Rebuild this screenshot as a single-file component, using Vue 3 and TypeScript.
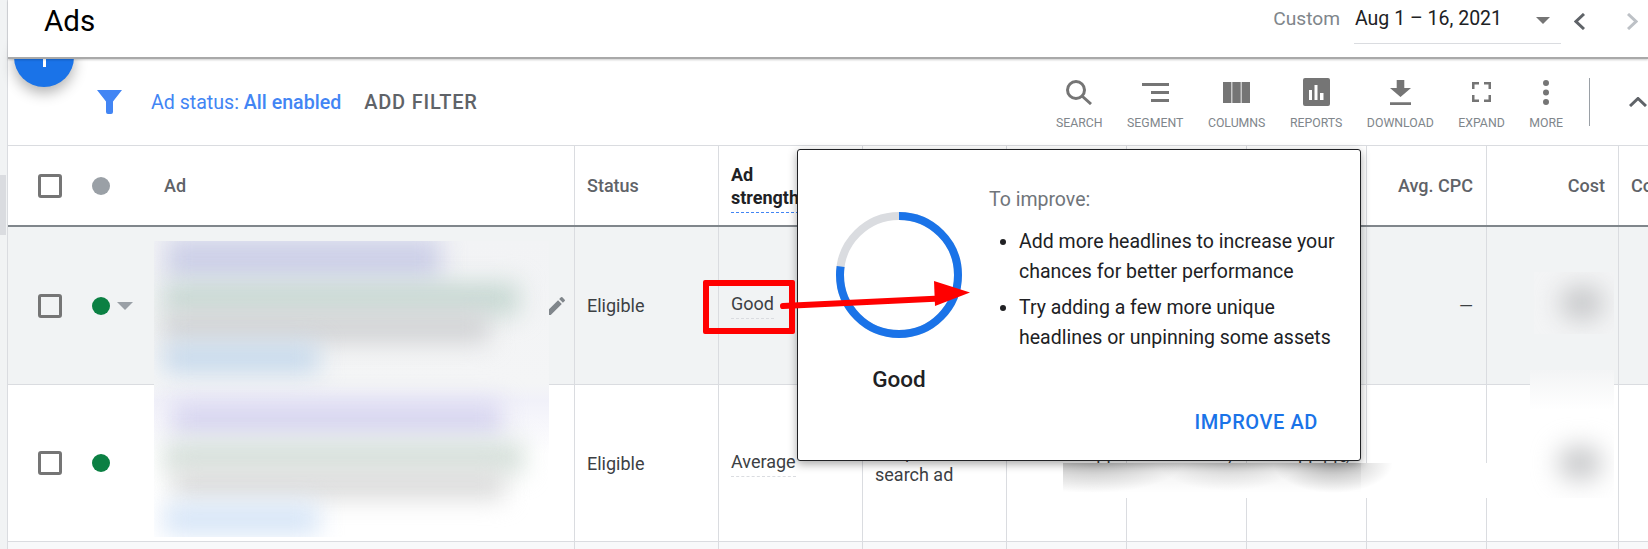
<script setup lang="ts">
interface Tool {
  label: string
  w: number
  h: number
  d: string
  stroke?: boolean
}

const tools: Tool[] = [
  { label: 'Search', w: 26, h: 25, d: 'M18.500 10a8.500 8.500 0 1 1-17 0 8.500 8.500 0 0 1 17 0zM16 16l9 8', stroke: true },
  { label: 'Segment', w: 27, h: 19, d: 'M0 0h27v3H0zM9 8h18v3H9zM9 16h18v3H9z' },
  { label: 'Columns', w: 27, h: 21, d: 'M0 0h8.400v21H0zM9.300 0h8.400v21H9.300zM18.600 0H27v21h-8.400z' },
  {
    label: 'Reports',
    w: 27,
    h: 28,
    d: 'M2 0h23a2 2 0 0 1 2 2v24a2 2 0 0 1-2 2H2a2 2 0 0 1-2-2V2a2 2 0 0 1 2-2zM6 12v10h3V12zM11.500 7v15h3V7zM17 15v7h3.500v-7z',
  },
  { label: 'Download', w: 21, h: 25, d: 'M6.700 0h7.600v8H21L10.500 17 0 8h6.700zM0 22.200h21V25H0z' },
  {
    label: 'Expand',
    w: 19,
    h: 20,
    d: 'M0 0h7v2.500H2.500V7H0zM12 0h7v7h-2.500V2.500H12zM0 13h2.500v4.500H7V20H0zM16.500 13H19v7h-7v-2.500h4.500z',
  },
  {
    label: 'More',
    w: 6,
    h: 25,
    d: 'M3 0a3 3 0 1 1 0 6 3 3 0 0 1 0-6zM3 9.500a3 3 0 1 1 0 6 3 3 0 0 1 0-6zM3 19a3 3 0 1 1 0 6 3 3 0 0 1 0-6z',
  },
]

const tips = [
  'Add more headlines to increase your chances for better performance',
  'Try adding a few more unique headlines or unpinning some assets',
]

const strength = 0.772
const radius = 59
const circumference = 2 * Math.PI * radius
const dash = `${circumference * strength} ${circumference}`
</script>

<template>
  <div class="page">
    <div class="gutter"><div class="thumb"></div></div>

    <main class="main">
      <header class="topbar">
        <h1 class="title">Ads</h1>
        <div class="range">
          <span class="custom">Custom</span>
          <div class="picker">
            <span>Aug 1 – 16, 2021</span>
            <i class="caret caret-picker"></i>
          </div>
          <svg class="nav" width="11" height="17" viewBox="0 0 11 17"><path d="M10 1L2 8.500L10 16" /></svg>
          <svg class="nav nav-off" width="11" height="17" viewBox="0 0 11 17"><path d="M1 1L9 8.500L1 16" /></svg>
        </div>
      </header>

      <section class="filterbar">
        <svg class="funnel" width="25" height="24" viewBox="0 0 25 24">
          <path d="M0 0h25l-9 11.500V22a2 2 0 0 1-2 2h-3a2 2 0 0 1-2-2V11.500z" />
        </svg>
        <span class="filter-text">Ad status: <b>All enabled</b></span>
        <span class="add-filter">ADD FILTER</span>

        <div class="tools">
          <div v-for="tool in tools" :key="tool.label" class="tool">
            <div class="tool-icon">
              <svg :width="tool.w" :height="tool.h" :viewBox="`0 0 ${tool.w} ${tool.h}`">
                <path :d="tool.d" :class="tool.stroke ? 'icon-line' : 'icon-fill'" fill-rule="evenodd" />
              </svg>
            </div>
            <span class="tool-label">{{ tool.label }}</span>
          </div>
        </div>
        <div class="tools-divider"></div>
        <svg class="collapse" width="18" height="10" viewBox="0 0 18 10"><path d="M1 9L9 1.500L17 9" /></svg>
      </section>

      <section class="table">
        <div class="row head">
          <div class="cell first">
            <i class="check"></i>
            <i class="dot dot-grey"></i>
            <span class="ad-label">Ad</span>
          </div>
          <div class="cell">Status</div>
          <div class="cell strong"><span class="dash-blue">Ad<br />strength</span></div>
          <div class="cell"></div>
          <div class="cell"></div>
          <div class="cell"></div>
          <div class="cell"></div>
          <div class="cell right">Avg. CPC</div>
          <div class="cell right">Cost</div>
          <div class="cell last">Conv.</div>
        </div>

        <div class="row active">
          <div class="cell first">
            <i class="check"></i>
            <i class="dot dot-green"></i>
            <i class="caret caret-row"></i>
            <svg class="pencil" width="24" height="24" viewBox="0 0 24 24">
              <path d="M3 17.250V21h3.750L17.810 9.940l-3.750-3.750L3 17.250zM20.710 7.040a1 1 0 0 0 0-1.410l-2.340-2.340a1 1 0 0 0-1.410 0l-1.830 1.830 3.750 3.750 1.830-1.830z" />
            </svg>
          </div>
          <div class="cell">Eligible</div>
          <div class="cell"><span class="dash-grey">Good</span></div>
          <div class="cell">Responsive search ad</div>
          <div class="cell"></div>
          <div class="cell"></div>
          <div class="cell"></div>
          <div class="cell right">—</div>
          <div class="cell"></div>
          <div class="cell last"></div>
        </div>

        <div class="row">
          <div class="cell first">
            <i class="check"></i>
            <i class="dot dot-green"></i>
          </div>
          <div class="cell">Eligible</div>
          <div class="cell"><span class="dash-grey">Average</span></div>
          <div class="cell">Responsive search ad</div>
          <div class="cell right">11</div>
          <div class="cell right">7</div>
          <div class="cell right">11.11%</div>
          <div class="cell right">—</div>
          <div class="cell"></div>
          <div class="cell last"></div>
        </div>

        <div class="row stub">
          <div class="cell first"></div>
          <div class="cell"></div>
          <div class="cell"></div>
          <div class="cell"></div>
          <div class="cell"></div>
          <div class="cell"></div>
          <div class="cell"></div>
          <div class="cell"></div>
          <div class="cell"></div>
          <div class="cell last"></div>
        </div>
      </section>
    </main>

    <div class="fab"><i class="fab-v"></i><i class="fab-h"></i></div>

    <!-- blurred-out ad copy and values, pasted over the table -->
    <div class="smear smear-ads">
      <i class="bar b1"></i><i class="bar b2"></i><i class="bar b3"></i><i class="bar b4"></i>
      <i class="bar b5"></i><i class="bar b6"></i><i class="bar b7"></i><i class="bar b8"></i>
    </div>
    <div class="smear smear-cost-a"><i class="blob"></i></div>
    <div class="smear smear-cost-b"><i class="blob"></i></div>
    <div class="smear smear-bottom"></div>

    <aside class="popover">
      <div class="score">
        <svg width="126" height="126" viewBox="0 0 126 126">
          <circle cx="63" cy="63" :r="radius" class="ring-bg" />
          <circle cx="63" cy="63" :r="radius" class="ring-fg" :stroke-dasharray="dash" transform="rotate(-90 63 63)" />
        </svg>
        <span class="score-label">Good</span>
      </div>
      <div class="advice">
        <p class="advice-title">To improve:</p>
        <ul class="advice-list">
          <li v-for="tip in tips" :key="tip">{{ tip }}</li>
        </ul>
        <span class="improve">IMPROVE AD</span>
      </div>
    </aside>

    <!-- annotation drawn on top of the screenshot -->
    <div class="red-box"></div>
    <svg class="red-arrow" width="200" height="40" viewBox="0 0 200 40">
      <path d="M3 28L160 20.500" />
      <polygon points="154,3 190,14.500 155,28" />
    </svg>
  </div>
</template>

<style>
html,
body {
  margin: 0;
  background: #fff;
}
</style>

<style scoped>
.page {
  position: relative;
  display: flex;
  width: 1648px;
  height: 549px;
  overflow: hidden;
  background: #fff;
  font-family: Roboto, 'Liberation Sans', sans-serif;
  font-size: 18px;
  color: #3c4043;
}

.gutter {
  flex: 0 0 7px;
  background: #f1f3f4;
  border-right: 1px solid #dadce0;
}

.thumb {
  width: 6px;
  height: 60px;
  margin-top: 175px;
  background: #dadce0;
}

.main {
  flex: 1;
  min-width: 0;
  display: flex;
  flex-direction: column;
}

.topbar {
  position: relative;
  z-index: 3;
  box-sizing: border-box;
  height: 59px;
  flex: none;
  display: flex;
  justify-content: space-between;
  padding: 0 10px 0 36px;
  background: #fff;
  border-bottom: 2px solid #a9a9a9;
  box-shadow: 0 1px 2px rgba(0, 0, 0, 0.2);
}

.title {
  margin: 4px 0 0;
  font-size: 29.500px;
  line-height: 34px;
  font-weight: 400;
  color: #000;
}

.range {
  display: flex;
  align-items: flex-start;
  font-size: 19.500px;
  line-height: 38px;
}

.custom {
  color: #80868b;
  margin-right: 14px;
  font-size: 19.200px;
}

.picker {
  box-sizing: border-box;
  width: 207px;
  height: 44px;
  padding-left: 1px;
  position: relative;
  border-bottom: 1px solid #dadce0;
  color: #202124;
}

.caret {
  display: block;
  width: 0;
  height: 0;
  border-style: solid;
  border-color: #757575 transparent transparent;
}

.caret-picker {
  position: absolute;
  top: 17px;
  right: 11px;
  border-width: 7px 7px 0;
}

.nav {
  margin: 13px 0 0 13px;
  fill: none;
  stroke: #5f6368;
  stroke-width: 3;
}

.nav-off {
  margin-left: 42px;
  stroke: #bdc1c6;
}

.filterbar {
  position: relative;
  z-index: 1;
  box-sizing: border-box;
  height: 87px;
  flex: none;
  display: flex;
  align-items: center;
  padding-left: 89px;
  border-bottom: 1px solid #dadce0;
}

.funnel {
  fill: #4285f4;
}

.filter-text {
  margin-left: 29px;
  font-size: 19.600px;
  color: #4285f4;
}

.filter-text b {
  font-weight: 500;
}

.add-filter {
  margin-left: 23px;
  font-size: 20px;
  letter-spacing: 0.8px;
  font-weight: 500;
  color: #5f6368;
}

.tools {
  display: flex;
  gap: 24.500px;
  margin-left: auto;
  align-self: flex-start;
  padding-top: 17px;
}

.tool {
  display: flex;
  flex-direction: column;
  align-items: center;
}

.tool-icon {
  height: 32px;
  display: flex;
  align-items: center;
}

.icon-fill {
  fill: #757575;
}

.icon-line {
  fill: none;
  stroke: #757575;
  stroke-width: 3;
}

.tool-label {
  margin-top: 8px;
  font-size: 12.300px;
  line-height: 14px;
  text-transform: uppercase;
  color: #80868b;
}

.tools-divider {
  width: 1px;
  height: 48px;
  margin-left: 26px;
  background: #9aa0a6;
}

.collapse {
  margin: 0 1px 0 39px;
  fill: none;
  stroke: #5f6368;
  stroke-width: 3;
}

.row {
  display: grid;
  grid-template-columns: 567px 144px 144px 144px 120px 120px 120px 120px 132px 29px;
  box-sizing: border-box;
  height: 157px;
  border-bottom: 1px solid #dadce0;
  line-height: 23px;
}

.head {
  height: 81px;
  border-bottom: 2px solid #80868b;
  font-weight: 500;
  color: #5f6368;
}

.active {
  height: 158px;
  background: #f1f3f4;
}

.stub {
  background: #f8f9fa;
}

.cell {
  box-sizing: border-box;
  display: flex;
  align-items: center;
  padding: 0 12px;
  border-right: 1px solid #dadce0;
  white-space: normal;
}

.first {
  padding: 0 0 0 30px;
}

.last {
  padding: 0 0 0 12px;
  border-right: 0;
  white-space: nowrap;
  overflow: hidden;
}

.right {
  justify-content: flex-end;
  padding-right: 13px;
}

.strong {
  color: #202124;
  font-weight: 700;
  white-space: nowrap;
}

.dash-blue {
  padding: 4px 0 3px;
  border-bottom: 1px dashed #4285f4;
}

.dash-grey {
  padding-bottom: 3px;
  border-bottom: 1px dashed #dadce0;
}

.check {
  box-sizing: border-box;
  flex: none;
  width: 24px;
  height: 24px;
  border: 3px solid #757575;
  border-radius: 3px;
}

.dot {
  flex: none;
  width: 18px;
  height: 18px;
  margin-left: 30px;
  border-radius: 50%;
}

.dot-grey {
  background: #9aa0a6;
}

.dot-green {
  background: #0b8043;
}

.ad-label {
  margin-left: 54px;
}

.caret-row {
  margin-left: 7px;
  border-width: 8px 8px 0;
  border-top-color: #9aa0a6;
}

.pencil {
  margin-left: auto;
  margin-right: 6px;
  fill: #80868b;
}

.fab {
  position: absolute;
  z-index: 2;
  left: 14px;
  top: 27px;
  width: 60px;
  height: 60px;
  border-radius: 50%;
  background: #1a73e8;
  box-shadow: 0 6px 14px rgba(0, 0, 0, 0.3);
}

.fab-v {
  position: absolute;
  left: 29px;
  top: 22px;
  width: 3px;
  height: 18px;
  background: #fff;
}

.fab-h {
  position: absolute;
  left: 21px;
  top: 29px;
  width: 19px;
  height: 3px;
  background: #fff;
}

.smear {
  position: absolute;
  z-index: 2;
  overflow: hidden;
}

.smear-ads {
  left: 154px;
  top: 241px;
  width: 395px;
  height: 296px;
  background: linear-gradient(#f2f3f5 0, #f4f5f6 48%, #f1f1f9 54%, #fff 72%);
}

.bar {
  position: absolute;
  filter: blur(12px);
}

.b1 {
  left: 12px;
  top: -4px;
  width: 275px;
  height: 44px;
  background: #cdd0e8;
}

.b2 {
  left: 10px;
  top: 42px;
  width: 355px;
  height: 32px;
  background: #c6d8d2;
}

.b3 {
  left: 10px;
  top: 70px;
  width: 325px;
  height: 32px;
  background: #d2d3d5;
}

.b4 {
  left: 10px;
  top: 102px;
  width: 155px;
  height: 30px;
  background: #c6d9ec;
}

.b5 {
  left: 18px;
  top: 160px;
  width: 330px;
  height: 36px;
  background: #d8d6f0;
}

.b6 {
  left: 10px;
  top: 200px;
  width: 360px;
  height: 32px;
  background: #d5e0da;
}

.b7 {
  left: 20px;
  top: 228px;
  width: 330px;
  height: 30px;
  background: #dbdbdb;
}

.b8 {
  left: 10px;
  top: 262px;
  width: 155px;
  height: 32px;
  background: #d6e5f7;
}

.smear-cost-a {
  left: 1534px;
  top: 272px;
  width: 80px;
  height: 62px;
  background: #f3f4f5;
}

.smear-cost-b {
  left: 1530px;
  top: 370px;
  width: 84px;
  height: 128px;
  background: linear-gradient(#f3f4f5 0, #fff 40px);
}

.blob {
  position: absolute;
  left: 26px;
  width: 44px;
  height: 34px;
  border-radius: 50%;
  background: #c4c5c7;
  filter: blur(13px);
}

.smear-cost-a .blob {
  top: 14px;
}

.smear-cost-b .blob {
  left: 28px;
  top: 76px;
}

.smear-bottom {
  z-index: 3;
  left: 1063px;
  top: 463px;
  width: 467px;
  height: 35px;
  background:
    radial-gradient(ellipse 60px 30px at 270px 0, rgba(0, 0, 0, 0.26), transparent),
    radial-gradient(ellipse 70px 28px at 165px 0, rgba(0, 0, 0, 0.13), transparent),
    radial-gradient(ellipse 90px 30px at 30px 0, rgba(0, 0, 0, 0.2), transparent),
    linear-gradient(rgba(0, 0, 0, 0.07), transparent 30px) 0 0 / 298px 100% no-repeat,
    #fff;
}

.popover {
  position: absolute;
  z-index: 4;
  left: 797px;
  top: 149px;
  box-sizing: border-box;
  width: 564px;
  height: 312px;
  display: flex;
  background: #fff;
  border: 1px solid #202124;
  border-radius: 3px;
  box-shadow: 0 3px 10px rgba(0, 0, 0, 0.35);
}

.score {
  flex: 0 0 191px;
  display: flex;
  flex-direction: column;
  align-items: center;
  padding: 62px 27px 0 38px;
  box-sizing: border-box;
}

.ring-bg,
.ring-fg {
  fill: none;
  stroke-width: 8;
}

.ring-bg {
  stroke: #dadce0;
}

.ring-fg {
  stroke: #1a73e8;
}

.score-label {
  margin-top: 26px;
  font-size: 22.500px;
  line-height: 30px;
  font-weight: 500;
  color: #202124;
}

.advice {
  flex: 1;
  display: flex;
  flex-direction: column;
  padding: 37px 18px 0 0;
  font-size: 19.500px;
}

.advice-title {
  margin: 0;
  line-height: 26px;
  color: #70757a;
}

.advice-list {
  margin: 14px 0 0;
  padding-left: 30px;
  line-height: 30px;
  color: #202124;
}

.advice-list li + li {
  margin-top: 6px;
}

.improve {
  align-self: flex-end;
  margin: 57px 24px 0 0;
  font-size: 20px;
  letter-spacing: 0.6px;
  line-height: 24px;
  font-weight: 500;
  color: #1a73e8;
}

.red-box {
  position: absolute;
  z-index: 5;
  left: 703px;
  top: 280px;
  box-sizing: border-box;
  width: 92px;
  height: 54px;
  border: 6px solid #f00;
  border-radius: 2px;
}

.red-arrow {
  position: absolute;
  z-index: 5;
  left: 780px;
  top: 278px;
}

.red-arrow path {
  fill: none;
  stroke: #f00;
  stroke-width: 6;
  stroke-linecap: round;
}

.red-arrow polygon {
  fill: #f00;
}
</style>
